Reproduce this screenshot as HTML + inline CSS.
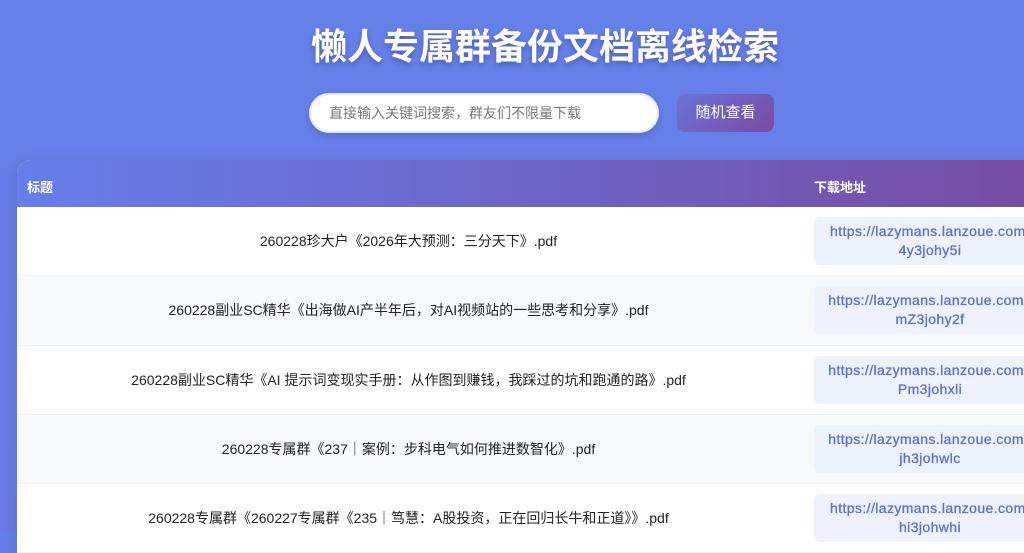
<!DOCTYPE html>
<html><head><meta charset="utf-8"><style>
*{margin:0;padding:0;box-sizing:border-box}
body{width:1024px;height:532px;overflow:hidden;background:linear-gradient(180deg,#6680ea 0%,#6a7ce6 100%);font-family:"Liberation Sans","Noto Sans CJK SC",sans-serif;position:relative}
h1{position:absolute;left:0;width:1090px;top:18px;text-align:center;color:#fff;font-size:36px;font-weight:bold;text-shadow:0 3px 6px rgba(0,0,0,.25);font-family:"Noto Sans CJK SC",sans-serif;letter-spacing:0;line-height:52px}
.inp{position:absolute;left:309px;top:93px;width:350px;height:40px;border-radius:20px;background:#fff;border:2px solid #e4e8f4;color:#777;font-size:14px;line-height:36px;padding-left:18px;box-shadow:0 3px 8px rgba(0,0,0,.15)}
.btn{position:absolute;left:677px;top:94px;width:97px;height:38px;border-radius:8px;background:linear-gradient(135deg,#6b72d8,#7a4aa4);color:#fff;font-size:15px;line-height:38px;text-align:center}
.tbl{position:absolute;left:17px;top:160px;width:1040px;border-top-left-radius:14px;overflow:hidden;background:#fff;box-shadow:0 4px 16px rgba(0,0,0,.15)}
.hd{height:47px;background:linear-gradient(90deg,#667eea,#764ba2);color:#fff;font-weight:bold;font-size:13px;position:relative}
.hd span{position:absolute;top:17px}
.row{height:69.3px;position:relative;border-bottom:1px solid #eef0f4}
.t{position:absolute;left:0;width:783px;top:0;height:69px;line-height:69px;text-align:center;font-size:14px;color:#222}
.l{position:absolute;left:797px;top:10px;width:240px;height:48px;background:#eef2fd;border-radius:6px;color:#5a6ed8;font-size:14px;text-align:center;line-height:19px;padding-top:5px;white-space:nowrap;letter-spacing:.4px;-webkit-text-stroke:.3px #5a6ed8}
.l span{display:inline-block;width:232px;margin-left:-8px}
</style></head><body>
<h1>懒人专属群备份文档离线检索</h1>
<div class="inp">直接输入关键词搜索，群友们不限量下载</div>
<div class="btn">随机查看</div>
<div class="tbl">
<div class="hd"><span style="left:10px">标题</span><span style="left:797px">下载地址</span></div>
<div>
<div class="row" style="background:#fff"><div class="t">260228珍大户《2026年大预测：三分天下》.pdf</div><div class="l"><span>https://lazymans.lanzoue.com/<br>4y3johy5i</span></div></div>
<div class="row" style="background:#f8f9fb"><div class="t">260228副业SC精华《出海做AI产半年后，对AI视频站的一些思考和分享》.pdf</div><div class="l"><span>https://lazymans.lanzoue.com/i<br>mZ3johy2f</span></div></div>
<div class="row" style="background:#fff"><div class="t">260228副业SC精华《AI 提示词变现实手册：从作图到赚钱，我踩过的坑和跑通的路》.pdf</div><div class="l"><span>https://lazymans.lanzoue.com/i<br>Pm3johxli</span></div></div>
<div class="row" style="background:#f8f9fb"><div class="t">260228专属群《237｜案例：步科电气如何推进数智化》.pdf</div><div class="l"><span>https://lazymans.lanzoue.com/i<br>jh3johwlc</span></div></div>
<div class="row" style="background:#fff"><div class="t">260228专属群《260227专属群《235｜笃慧：A股投资，正在回归长牛和正道》》.pdf</div><div class="l"><span>https://lazymans.lanzoue.com/<br>hi3johwhi</span></div></div>
</div></div>
</body></html>
